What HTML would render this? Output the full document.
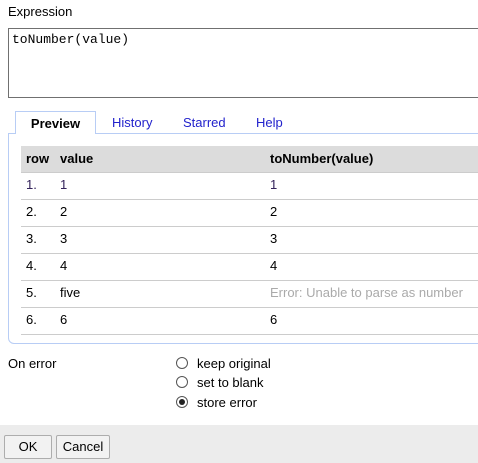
<!DOCTYPE html>
<html><head><style>
body{margin:0;width:478px;height:463px;overflow:hidden;background:#fff;font-family:"Liberation Sans",Arial,sans-serif;font-size:12px;color:#000;position:relative}
.a{position:absolute;white-space:nowrap}
.ta{position:absolute;left:8px;top:28px;width:480px;height:70px;border:1px solid #707070;box-sizing:border-box;font-family:"Liberation Mono",monospace;font-size:13px;padding:3px 3px}
.panel{position:absolute;left:8px;top:133px;width:490px;height:211px;border:1px solid #b8cdf5;border-radius:0 0 0 6px;box-sizing:border-box}
.tab{position:absolute;left:15px;top:111px;width:81px;height:23px;border:1px solid #b8cdf5;border-bottom:none;background:#fff;box-sizing:border-box;font-weight:bold;font-size:13px;text-align:center;line-height:23px}
.tl{color:#2222cc;font-size:13px;top:115px}
.hdr{position:absolute;left:21px;top:146px;width:460px;height:26px;background:#dcdcdc;border-bottom:1px solid #ccc}
.line{position:absolute;left:21px;width:460px;height:1px;background:#ccc}
.b{font-weight:bold;font-size:13px}
.r{font-size:13px}
.rad{position:absolute;left:176px;width:12px;height:12px;border:1px solid #555;border-radius:50%;box-sizing:border-box;background:#fff}
.bar{position:absolute;left:0;top:425px;width:478px;height:38px;background:#ececec}
.btn{position:absolute;top:435px;height:24px;border:1px solid #adadad;border-radius:2px;background:#f2f2f2;box-sizing:border-box;text-align:center;line-height:22px;font-size:13px}
</style></head><body>
<div class="a" style="left:8px;top:4px;font-size:13px">Expression</div>
<div class="ta">toNumber(value)</div>
<div class="panel"></div>
<div class="tab">Preview</div>
<div class="a tl" style="left:112px">History</div>
<div class="a tl" style="left:183px">Starred</div>
<div class="a tl" style="left:256px">Help</div>
<div class="hdr"></div>
<div class="a b" style="left:26px;top:151px">row</div>
<div class="a b" style="left:60px;top:151px">value</div>
<div class="a b" style="left:270px;top:151px">toNumber(value)</div>

<div class="a r" style="left:26px;top:177px;color:#33225a">1.</div><div class="a r" style="left:60px;top:177px;color:#33225a">1</div><div class="a r" style="left:270px;top:177px;color:#33225a">1</div>
<div class="line" style="top:199px"></div>
<div class="a r" style="left:26px;top:204px">2.</div><div class="a r" style="left:60px;top:204px">2</div><div class="a r" style="left:270px;top:204px">2</div>
<div class="line" style="top:226px"></div>
<div class="a r" style="left:26px;top:231px">3.</div><div class="a r" style="left:60px;top:231px">3</div><div class="a r" style="left:270px;top:231px">3</div>
<div class="line" style="top:253px"></div>
<div class="a r" style="left:26px;top:258px">4.</div><div class="a r" style="left:60px;top:258px">4</div><div class="a r" style="left:270px;top:258px">4</div>
<div class="line" style="top:280px"></div>
<div class="a r" style="left:26px;top:285px">5.</div><div class="a r" style="left:60px;top:285px">five</div><div class="a r" style="left:270px;top:285px;color:#aaa">Error: Unable to parse as number</div>
<div class="line" style="top:307px"></div>
<div class="a r" style="left:26px;top:312px">6.</div><div class="a r" style="left:60px;top:312px">6</div><div class="a r" style="left:270px;top:312px">6</div>
<div class="line" style="top:334px"></div>

<div class="a" style="left:8px;top:356px;font-size:13px">On error</div>
<div class="rad" style="top:357px"></div><div class="a" style="left:197px;top:356px;font-size:13px">keep original</div>
<div class="rad" style="top:376px"></div><div class="a" style="left:197px;top:375px;font-size:13px">set to blank</div>
<div class="rad" style="top:396px"></div><div style="position:absolute;left:179px;top:399px;width:6px;height:6px;border-radius:50%;background:#222"></div><div class="a" style="left:197px;top:395px;font-size:13px">store error</div>

<div class="bar"></div>
<div class="btn" style="left:4px;width:48px">OK</div>
<div class="btn" style="left:56px;width:54px">Cancel</div>
</body></html>
